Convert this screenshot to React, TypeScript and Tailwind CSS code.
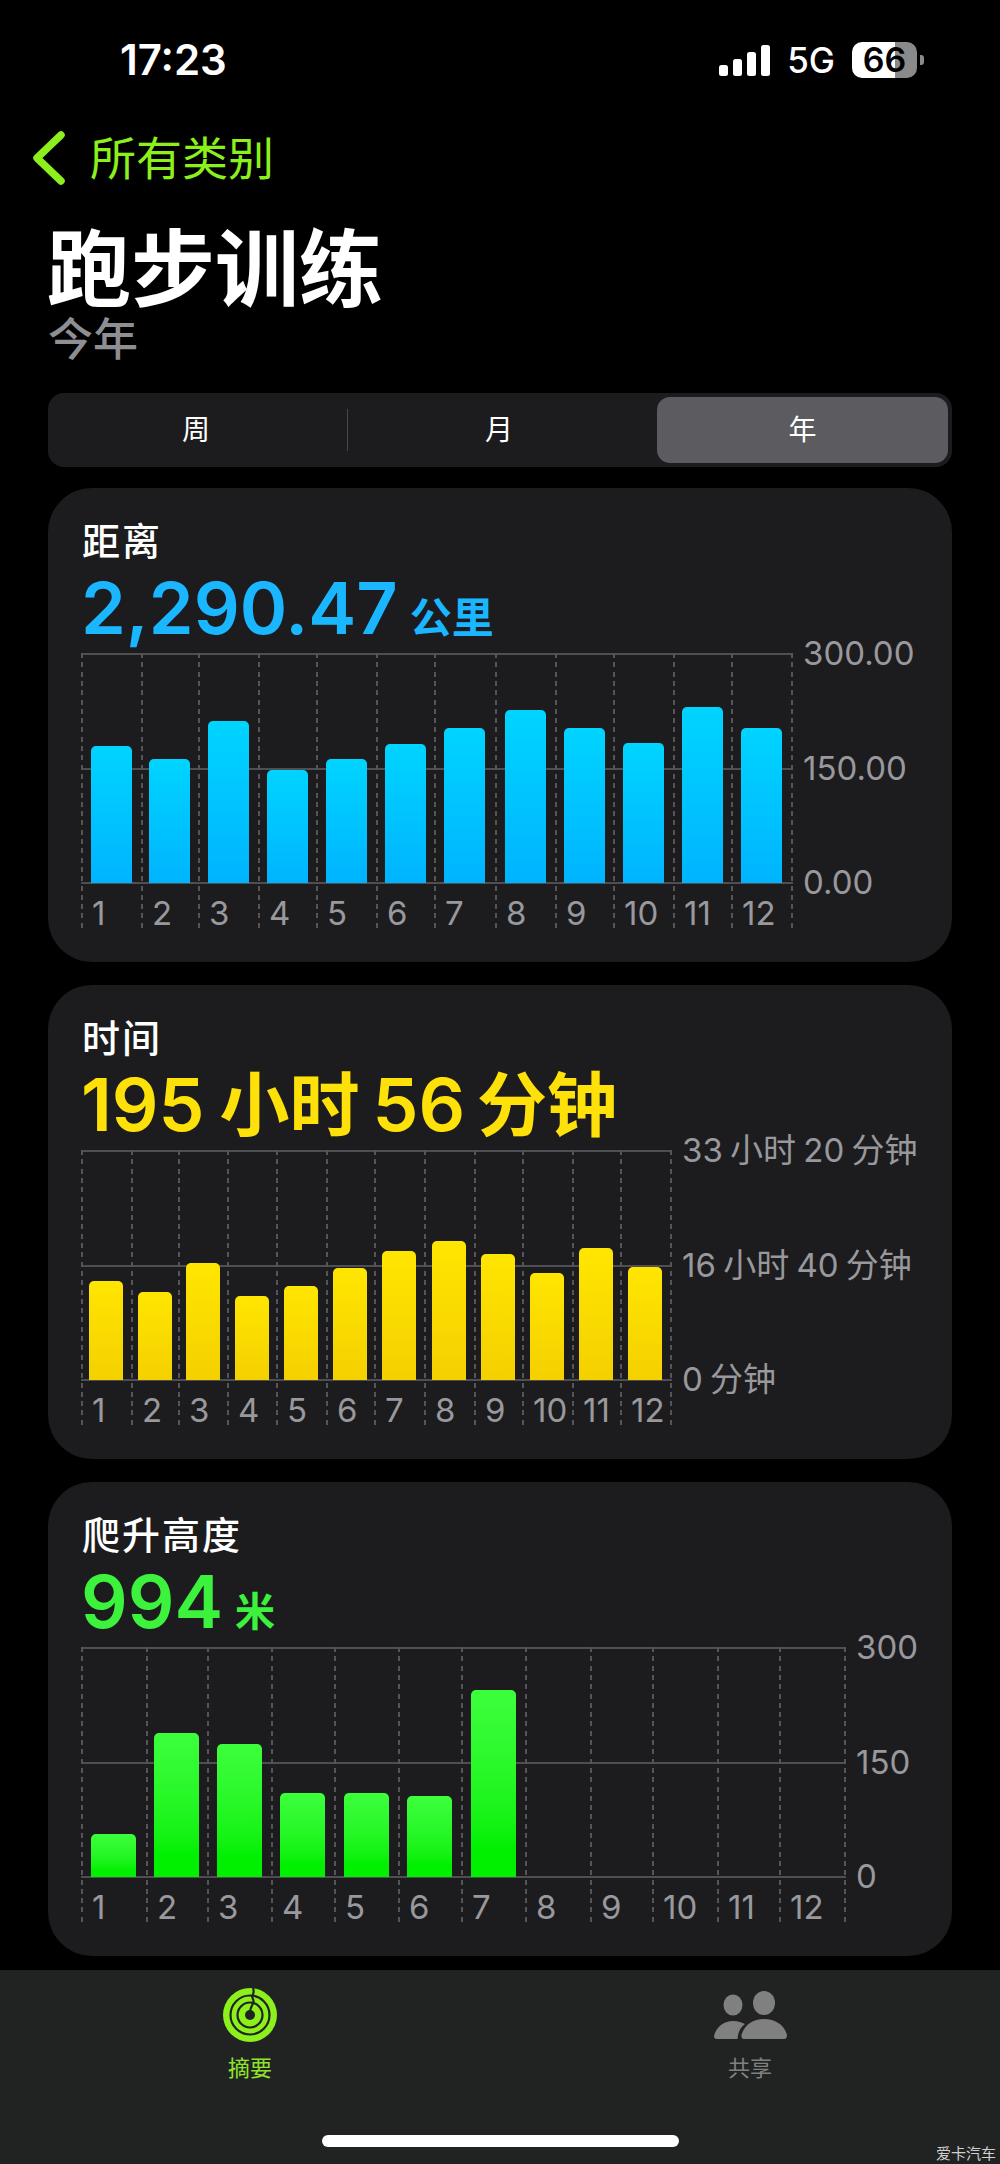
import React from "react";

const DASH =
  "bg-[repeating-linear-gradient(to_bottom,#555558_0,#555558_5px,transparent_5px,transparent_9.3px)] bg-no-repeat bg-[length:2px_100%]";

type ChartProps = {
  cols: string;
  bars: number[];
  barW: string;
  gradient: string;
  yLabels: React.ReactNode[];
};

function Chart({ cols, bars, barW, gradient, yLabels }: ChartProps) {
  return (
    <div className="flex items-start">
      <div className="grid">
        <div className="col-start-1 row-start-1 h-[231px] flex flex-col justify-between">
          <div className="h-[2px] bg-[#4f4f53]" />
          <div className="h-[2px] bg-[#4f4f53]" />
          <div className="h-[2px] bg-[#4f4f53]" />
        </div>
        <div className={`col-start-1 row-start-1 grid ${cols}`}>
          {bars.map((h, i) => (
            <div key={i} className={`flex flex-col ${DASH}`}>
              <div className="h-[230px] flex items-end justify-center">
                {h > 0 && (
                  <div
                    className={`${barW} rounded-t-[5px] ${gradient}`}
                    style={{ height: h }}
                  />
                )}
              </div>
              <div className="h-[48px] pl-[11px] pt-[10px] text-[33px] leading-[40px] text-[#98989d] whitespace-nowrap">
                {i + 1}
              </div>
            </div>
          ))}
          <div className={DASH} />
        </div>
      </div>
      <div className="ml-[10px] h-[231px] flex flex-col justify-between text-[33px] text-[#98989d] [word-spacing:-2px]">
        {yLabels.map((l, i) => (
          <div key={i} className="h-[2px] flex items-center whitespace-nowrap">
            {l}
          </div>
        ))}
      </div>
    </div>
  );
}

function Card({ title, value, chart }: { title: string; value: React.ReactNode; chart: React.ReactNode }) {
  return (
    <section className="h-[474px] rounded-[44px] bg-[#1c1c1e] pl-[33px] pt-[33px]">
      <h2 className="h-[40px] pl-[1px] text-[38px] leading-[40px] font-medium text-white tracking-[2px]">{title}</h2>
      <div className="mt-[17px] h-[75px]">{value}</div>
      {chart}
    </section>
  );
}

function ActivityIcon() {
  return (
    <svg width="54" height="54" viewBox="0 0 54 54">
      <circle cx="27" cy="27" r="27" fill="#8cf01c" />
      <circle cx="27" cy="27" r="19.5" fill="none" stroke="#212323" strokeWidth="2.2" />
      <circle cx="27" cy="27" r="12.5" fill="none" stroke="#212323" strokeWidth="2.2" />
      <circle cx="27" cy="27" r="5" fill="#212323" />
      <path d="M30 0 C31 3 31 5 29.5 7.5 C28 9 31 11 30.5 14 C30 17 27.5 18 27 24" fill="none" stroke="#212323" strokeWidth="2.2" />
    </svg>
  );
}

function ShareIcon() {
  return (
    <svg width="73" height="48" viewBox="0 0 73 48" fill="#808080">
      <ellipse cx="19" cy="14" rx="9.5" ry="10.5" />
      <ellipse cx="50" cy="12" rx="11" ry="12" />
      <path d="M30 48 Q27 48 27.5 44 C30 34 39 28 50 28 C61 28 70.5 34 73 44 Q73 48 70 48 Z" />
      <path d="M3 48 Q0 48 0 45 C2 36 10 30 19 30 C23 30 27 31 31 33 C26.500 36 24 41 23.500 48 Z" />
    </svg>
  );
}

export default function App() {
  return (
    <div className="relative w-[1000px] h-[2164px] overflow-hidden bg-black flex flex-col font-['Inter','Noto_Sans_CJK_SC',sans-serif]">
      {/* status bar */}
      <div className="h-[120px] flex items-center justify-between pl-[120px] pr-[76px]">
        <span className="text-[42px] font-semibold text-white leading-none">17:23</span>
        <div className="flex items-center">
          <svg width="51" height="31" viewBox="0 0 51 31" fill="#fff">
            <rect x="0" y="20" width="9" height="11" rx="2.500" />
            <rect x="14" y="14" width="9" height="17" rx="2.500" />
            <rect x="28" y="7" width="9" height="24" rx="2.500" />
            <rect x="42" y="0" width="9" height="31" rx="2.500" />
          </svg>
          <span className="ml-[17px] text-[35px] font-medium text-white leading-none">5G</span>
          <div className="ml-[17px] w-[65px] h-[36px] rounded-[10px] flex items-center justify-center bg-[linear-gradient(to_right,#fff_0,#fff_66%,#8a8a8a_66%,#8a8a8a_100%)]">
            <span className="text-[34px] font-semibold text-black leading-none">66</span>
          </div>
          <div className="ml-[3px] w-[4px] h-[10px] rounded-r-[3px] bg-[#8a8a8a]" />
        </div>
      </div>

      {/* back */}
      <div className="h-[76px] flex items-center pl-[32px]">
        <svg width="34" height="56" viewBox="0 0 34 56" fill="none" stroke="#8cf01c" strokeWidth="7.500" strokeLinecap="round" strokeLinejoin="round">
          <path d="M29 5 L5 28 L29 51" />
        </svg>
        <span className="ml-[24px] text-[46px] leading-none text-[#8cf01c]">所有类别</span>
      </div>

      <h1 className="mt-[29px] pl-[47px] text-[84px] leading-[90px] font-bold text-white">跑步训练</h1>
      <div className="pl-[48px] text-[45px] leading-[50px] font-medium text-[#8e8e93]">今年</div>

      {/* segmented */}
      <div className="mt-[28px] mx-[48px] h-[74px] rounded-[16px] bg-[#1c1c1e] p-[4px] grid grid-cols-[295px_310px_291px] text-[28px] text-white items-stretch">
        <div className="flex items-center justify-center pr-[7px]">周</div>
        <div className="flex items-center justify-center pr-[6px] relative">
          <span className="absolute left-0 top-[12px] bottom-[12px] w-[1px] bg-[#48484a]" />
          月
        </div>
        <div className="flex items-center justify-center rounded-[13px] bg-[#5b5b60]">年</div>
      </div>

      {/* cards */}
      <div className="mt-[21px] mx-[48px] flex flex-col gap-[23px]">
        <Card
          title="距离"
          value={
            <div className="flex items-baseline text-[#1ab6ff] font-semibold leading-[60px]">
              <span className="text-[72px]">2,290.47</span>
              <span className="ml-[12px] text-[42px] -translate-y-[1px]">公里</span>
            </div>
          }
          chart={
            <Chart
              cols="grid-cols-[60px_57px_60px_58px_60px_58px_61px_60px_58px_60px_58px_60px_2px]"
              bars={[137, 124, 162, 113, 124, 139, 155, 173, 155, 140, 176, 155]}
              barW="w-[41px]"
              gradient="bg-gradient-to-b from-[#00d4ff] to-[#00b4ff]"
              yLabels={["300.00", "150.00", "0.00"]}
            />
          }
        />
        <Card
          title="时间"
          value={
            <div className="flex items-baseline text-[#ffe10a] font-semibold leading-[60px]">
              <span className="text-[73px]">195</span>
              <span className="ml-[15px] text-[70px]">小时</span>
              <span className="ml-[13px] text-[73px]">56</span>
              <span className="ml-[12px] text-[70px]">分钟</span>
            </div>
          }
          chart={
            <Chart
              cols="grid-cols-[50px_47px_49px_49px_50px_48px_50px_50px_48px_50px_48px_50px_2px]"
              bars={[99, 88, 117, 84, 94, 112, 129, 139, 126, 107, 132, 113]}
              barW="w-[34px]"
              gradient="bg-gradient-to-b from-[#ffe600] to-[#f4d000]"
              yLabels={["33 小时 20 分钟", "16 小时 40 分钟", "0 分钟"]}
            />
          }
        />
        <Card
          title="爬升高度"
          value={
            <div className="flex items-baseline text-[#3cf23c] font-semibold leading-[60px]">
              <span className="text-[73px]">994</span>
              <span className="ml-[12px] text-[40px] -translate-y-[2px]">米</span>
            </div>
          }
          chart={
            <Chart
              cols="grid-cols-[65px_61px_64px_63px_64px_63px_64px_65px_62px_65px_62px_65px_2px]"
              bars={[43, 144, 133, 84, 84, 81, 187, 0, 0, 0, 0, 0]}
              barW="w-[45px]"
              gradient="bg-gradient-to-b from-[#3cff3c] to-[#00f000] to-85%"
              yLabels={["300", "150", "0"]}
            />
          }
        />
      </div>

      {/* tab bar */}
      <div className="mt-[14px] flex-1 bg-[#212323] flex flex-col">
        <div className="grid grid-cols-2 pt-[18px]">
          <div className="flex flex-col items-center">
            <ActivityIcon />
            <span className="mt-[11px] text-[22px] leading-[30px] text-[#8fe32a]">摘要</span>
          </div>
          <div className="flex flex-col items-center">
            <div className="h-[54px] flex items-center"><ShareIcon /></div>
            <span className="mt-[11px] text-[22px] leading-[30px] text-[#808080]">共享</span>
          </div>
        </div>
        <div className="mt-[52px] mx-auto w-[357px] h-[12px] rounded-full bg-white" />
      </div>

      <span className="absolute right-[4px] bottom-[3px] text-[15px] leading-none text-[#d0d0d0]">爱卡汽车</span>
    </div>
  );
}
